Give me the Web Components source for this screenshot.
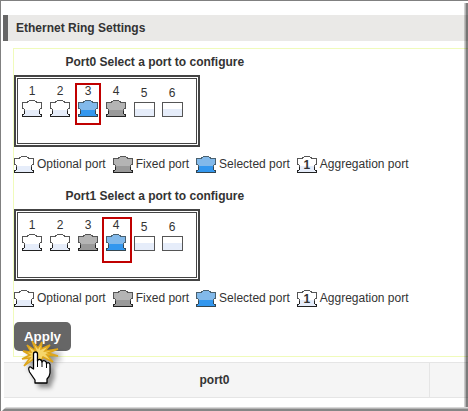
<!DOCTYPE html>
<html lang="en">
<head>
<meta charset="utf-8">
<title>Ethernet Ring Settings</title>
<style>
  body {
    margin: 0;
    overflow: hidden;
    background: #fff;
    font: 12px/16px "Liberation Sans", Arial, sans-serif;
    color: #333;
  }
</style>
</head>
<body>
<window-frame>
  <section-title>Ethernet Ring Settings</section-title>
  <ring-panel>
    <port-group name="Port0" selected="3" fixed="4"></port-group>
    <port-group name="Port1" selected="4" fixed="3"></port-group>
    <apply-button>Apply</apply-button>
  </ring-panel>
  <ring-table>port0</ring-table>
</window-frame>

<script>
const define = (name, html, setup) => {
  const template = document.createElement('template');
  template.innerHTML = html;
  customElements.define(name, class extends HTMLElement {
    constructor() {
      super();
      this.attachShadow({ mode: 'open' });
      this.shadowRoot.appendChild(template.content.cloneNode(true));
      if (setup) {
        setup(this, this.shadowRoot);
      }
    }
  });
};

define('window-frame', `
  <style>
    :host {
      display: block;
      position: relative;
      box-sizing: border-box;
      width: 468px;
      height: 411px;
      padding: 14px 0 0 2px;
      border-top: 1px solid #808080;
      border-left: 1px solid #808080;
      overflow: hidden;
    }

    .right, .bottom {
      position: absolute;
      right: 0;
      bottom: 0;
    }

    .right {
      top: 2px;
      width: 4px;
      height: 408px;
      background: linear-gradient(90deg, rgba(0,0,0,.18) 1px, rgba(0,0,0,.3) 1px 2px, rgba(0,0,0,.5) 2px);
    }

    .bottom {
      left: 1px;
      height: 4px;
      background: linear-gradient(#d8d8d8 1px, #b4b4b4 1px 2px, #868686 2px);
      clip-path: polygon(4px 0, 100% 0, 100% 100%, 0 100%);
    }
  </style>
  <slot></slot>
  <div class="right"></div>
  <div class="bottom"></div>
`);

define('section-title', `
  <style>
    :host {
      display: block;
      height: 26px;
      padding-left: 8px;
      border-left: 5px solid #666;
      background: #eae9e7;
      font-weight: bold;
      line-height: 26px;
    }
  </style>
  <slot></slot>
`);

define('ring-panel', `
  <style>
    :host {
      display: block;
      box-sizing: border-box;
      height: 309px;
      margin: 7px 0 0 10px;
      padding-top: 5px;
      border: 1px solid #f0fbbb;
      border-right: 0;
    }
  </style>
  <slot></slot>
`);

define('port-icon', `
  <style>
    :host {
      display: block;
      position: relative;
      width: 20px;
      height: 17px;
      --line: #555;
      --top: #fff;
      --low: #e6edfa;
    }

    :host([kind=fixed]) {
      --top: #b4b4b4;
      --low: #999;
    }

    :host([kind=selected]) {
      --line: #49606f;
      --top: #82b9ea;
      --low: #3397ee;
    }

    :host([kind=plain]) {
      width: 21px;
    }

    svg {
      display: block;
      width: 100%;
      height: 100%;
      shape-rendering: crispEdges;
    }

    .top { fill: var(--top); }
    .low { fill: var(--low); }
    .line { fill: var(--line); }
    .foot { fill: #222; }
    :host([kind=selected]) .foot { fill: #354650; }

    .square, :host([kind=plain]) .plug { display: none; }
    :host([kind=plain]) .square { display: block; }

    slot {
      display: block;
      position: absolute;
      top: 1px;
      width: 20px;
      text-align: center;
      font-weight: bold;
    }
  </style>
  <svg class="plug" viewBox="0 0 20 17">
    <path class="top" d="M7 1H13V2H15V3H19V8H18V10H2V8H1V3H5V2H7Z"/>
    <path class="low" d="M2 10H18V15H19V16H1V15H2Z"/>
    <path class="line" d="M7 0h6v1h-6zM5 1h2v1h-2zM13 1h2v1h-2zM0 2h6v1h-6zM14 2h6v1h-6zM0 3h1v5h-1zM19 3h1v5h-1zM0 8h2v1h-2zM18 8h2v1h-2zM2 9h1v2h-1zM17 9h1v2h-1z"/>
    <path class="foot" d="M2 11h1v3h-1zM17 11h1v3h-1zM0 14h2v1h-2zM18 14h2v1h-2zM0 15h1v1h-1zM19 15h1v1h-1zM0 16h20v1h-20z"/>
  </svg>
  <svg class="square" viewBox="0 0 21 17">
    <rect x="1" y="3" width="19" height="6" fill="#fff"/>
    <rect x="1" y="9" width="19" height="7" fill="#e6edfa"/>
    <rect x=".5" y="2.5" width="20" height="14" fill="none" stroke="#555"/>
  </svg>
  <slot></slot>
`);

define('port-legend', `
  <style>
    :host {
      display: flex;
      height: 17px;
    }

    span {
      margin: 0 7px 0 3px;
      white-space: nowrap;
    }
  </style>
  <port-icon></port-icon><span>Optional port</span>
  <port-icon kind="fixed"></port-icon><span>Fixed port</span>
  <port-icon kind="selected"></port-icon><span>Selected port</span>
  <port-icon>1</port-icon><span>Aggregation port</span>
`);

define('port-group', `
  <style>
    :host {
      display: block;
      height: 134px;
    }

    h2 {
      height: 21px;
      margin: 0 0 0 51.5px;
      font-size: 12px;
      line-height: 17px;
    }

    .box {
      box-sizing: border-box;
      width: 186px;
      height: 72px;
      padding: 1px;
      border: 2px solid #444;
    }

    .ports {
      display: flex;
      gap: 8px;
      box-sizing: border-box;
      height: 66px;
      padding: 4px 0 0 4px;
      border: 1px solid #444;
    }

    .port {
      position: relative;
      width: 20px;
      height: 35px;
      text-align: center;
    }

    .port b {
      display: block;
      height: 17px;
      font-weight: normal;
    }

    .plain b {
      position: relative;
      top: 2px;
    }

    .mark {
      position: absolute;
      box-sizing: border-box;
      border: 2px solid #c00000;
      inset: 0 -3px -7px -3px;
    }

    .wide {
      inset: 0 -6px -11px -4px;
    }

    port-legend {
      margin-top: 9px;
    }
  </style>
  <h2></h2>
  <div class="box"><div class="ports"></div></div>
  <port-legend></port-legend>
`, (host, root) => {
  const selected = Number(host.getAttribute('selected'));
  const fixed = Number(host.getAttribute('fixed'));
  root.querySelector('h2').textContent = `${host.getAttribute('name')} Select a port to configure`;
  const ports = root.querySelector('.ports');
  for (let i = 1; i <= 6; i += 1) {
    let kind = i > 4 ? 'plain' : 'optional';
    if (i === selected) kind = 'selected';
    if (i === fixed) kind = 'fixed';
    const port = document.createElement('div');
    port.className = `port ${kind}`;
    port.innerHTML = `<b>${i}</b><port-icon kind="${kind}"></port-icon>`;
    if (i === selected) {
      port.innerHTML += `<div class="mark ${i === 4 ? 'wide' : ''}"></div>`;
    }
    ports.appendChild(port);
  }
});

define('apply-button', `
  <style>
    :host {
      display: block;
      position: relative;
      width: 57px;
      height: 29px;
    }

    button {
      width: 57px;
      height: 29px;
      padding: 0;
      border: 0;
      border-radius: 5px;
      background: #666;
      color: #fff;
      font: bold 13.3333px "Liberation Sans", Arial, sans-serif;
    }

    svg {
      position: absolute;
      left: 6px;
      top: 17px;
      overflow: visible;
      filter: drop-shadow(4px 4px 2px rgba(0,0,0,.4));
    }
  </style>
  <button><slot></slot></button>
  <svg width="42" height="46" viewBox="0 0 42 46">
    <path fill="#f6d66b" stroke="#dda51b" stroke-width="1.5" d="M16 12L12 2L18 9L22 3L21 10L30 6L25 12L38 10L28 14L38 17L27 16L33 23L23 18L20 24L15 19L4 27L10 19L2 20L10 16L3 12L11 13L7 6Z"/>
    <path fill="#fff" stroke="#000" stroke-width="1.3" stroke-linejoin="round" d="M13.500 30V15Q13.500 13 15.500 13T17.500 15V22Q18 20 20 20.500T22 23Q23 21 25 22T26.500 25Q27.500 23 29 24T30 27V34Q29.500 38 27 40V44H15V41L9.500 33Q8 30 9 28.500T12 29Z"/>
    <path fill="none" stroke="#000" d="M17.500 21V28M22 23V28M26.500 25V29"/>
  </svg>
`);

define('ring-table', `
  <style>
    :host {
      display: grid;
      grid-template-columns: 421px 1fr;
      box-sizing: border-box;
      height: 36px;
      margin: 5px 0 0 1px;
      border-top: 1px solid #e5e5e5;
      border-bottom: 1px solid #e5e5e5;
      background: #f5f5f5;
      font-weight: bold;
      line-height: 34px;
      text-align: center;
    }

    div + div {
      border-left: 1px solid #e5e5e5;
      margin-left: 4px;
    }
  </style>
  <div><slot></slot></div>
  <div></div>
`);
</script>
</body>
</html>
